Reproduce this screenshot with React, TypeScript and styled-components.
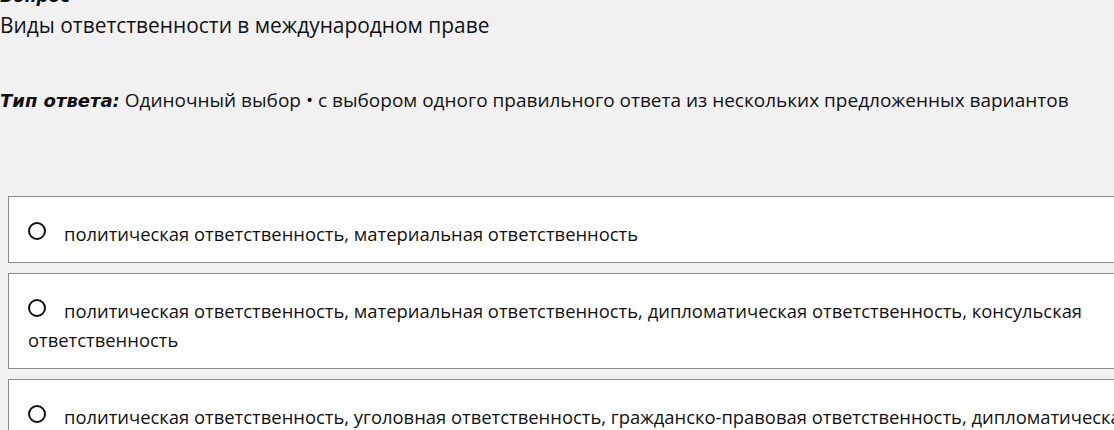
import React from "react";
import styled, { createGlobalStyle } from "styled-components";

const GlobalStyle = createGlobalStyle`
  html, body {
    margin: 0;
    padding: 0;
    background: #f1f1f1;
    overflow: hidden;
  }
  body {
    font-family: "Open Sans", "Noto Sans", sans-serif;
    color: #111;
  }
`;

const Page = styled.div`
  width: 1250px;
  margin-top: -13px;
`;

const QuestionLabel = styled.div`
  font-family: "DejaVu Sans", sans-serif;
  font-weight: bold;
  font-style: italic;
  font-size: 17px;
  line-height: 18px;
  height: 24px;
`;

const QuestionText = styled.div`
  font-size: 20.9px;
  line-height: 28px;
`;

const AnswerType = styled.div`
  margin-top: 48px;
  font-size: 19px;
  line-height: 26px;
`;

const TypeLabel = styled.span`
  font-family: "DejaVu Sans", sans-serif;
  font-weight: bold;
  font-style: italic;
  font-size: 18px;
`;

const OptionList = styled.div`
  margin-top: 82px;
  margin-left: 8px;
  display: flex;
  flex-direction: column;
  gap: 10px;
`;

const OptionCard = styled.label`
  display: block;
  background: #fff;
  border: 1px solid #8c8c8c;
  padding: 22px 20px 14px 19px;
  width: 1180px;
  font-size: 18.4px;
  line-height: 29px;
  cursor: pointer;
`;

const Radio = styled.span`
  display: inline-block;
  box-sizing: border-box;
  width: 18px;
  height: 18px;
  border: 2.5px solid #111;
  border-radius: 50%;
  margin-right: 18px;
  vertical-align: 1px;
`;

const options = [
  "политическая ответственность, материальная ответственность",
  "политическая ответственность, материальная ответственность, дипломатическая ответственность, консульская ответственность",
  "политическая ответственность, уголовная ответственность, гражданско-правовая ответственность, дипломатическая ответственность",
];

export default function App() {
  return (
    <>
      <GlobalStyle />
      <Page>
        <QuestionLabel>Вопрос</QuestionLabel>
        <QuestionText>Виды ответственности в международном праве</QuestionText>
        <AnswerType>
          <TypeLabel>Тип ответа:</TypeLabel> Одиночный выбор • с выбором одного
          правильного ответа из нескольких предложенных вариантов
        </AnswerType>
        <OptionList>
          {options.map((text) => (
            <OptionCard key={text}>
              <Radio />
              {text}
            </OptionCard>
          ))}
        </OptionList>
      </Page>
    </>
  );
}
